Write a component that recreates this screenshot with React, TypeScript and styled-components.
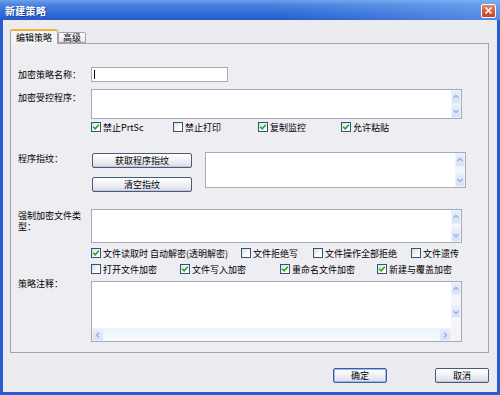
import React from "react";
import styled, { createGlobalStyle } from "styled-components";

const Global = createGlobalStyle`
  * { box-sizing: border-box; }
  html, body { margin: 0; padding: 0; background: #ffffff; }
  body { font-family: "Noto Sans CJK SC", "Noto Sans", sans-serif; font-size: 9px; color: #000; }
`;

const Window = styled.div`
  width: 500px;
  height: 395px;
  background: #2a5bd0;
  display: flex;
  flex-direction: column;
  overflow: hidden;
`;

const TitleBar = styled.div`
  height: 20px;
  flex: none;
  display: flex;
  align-items: center;
  justify-content: space-between;
  padding: 0 4px 0 5px;
  background: linear-gradient(180deg, #6f9fea 0%, #4682de 25%, #3470d8 60%, #2858c8 100%);
  position: relative;
  &::after {
    content: "";
    position: absolute;
    inset: 0;
    background: linear-gradient(90deg, rgba(255,255,255,0) 55%, rgba(150,195,255,0.45) 100%);
    pointer-events: none;
  }
`;

const Title = styled.span`
  color: #fff;
  font-weight: bold;
  font-size: 10px;
  letter-spacing: 0.3px;
  text-shadow: 1px 1px 0 #1b3f99;
  position: relative;
  z-index: 1;
`;

const CloseBtn = styled.div`
  width: 15px;
  height: 14px;
  margin-top: 1px;
  border: 1px solid #ffffff;
  border-radius: 2px;
  background: linear-gradient(180deg, #e8876a 0%, #d45a3c 55%, #c4462c 100%);
  display: flex;
  align-items: center;
  justify-content: center;
  position: relative;
  z-index: 1;
`;

const Body = styled.div`
  flex: 1;
  margin: 0 3px 3px 3px;
  background: #ecebf0;
  padding: 9px 8px 0 7px;
  display: flex;
  flex-direction: column;
`;

const TabStrip = styled.div`
  display: flex;
  align-items: flex-end;
  height: 14px;
  position: relative;
  z-index: 2;
`;

const Tab = styled.div<{ $active?: boolean }>`
  height: ${(p) => (p.$active ? "15px" : "11px")};
  margin-bottom: ${(p) => (p.$active ? "-1px" : "0")};
  padding: 0 ${(p) => (p.$active ? "5px" : "4px")};
  display: flex;
  align-items: center;
  border: 1px solid #a2a2b0;
  border-bottom: ${(p) => (p.$active ? "none" : "1px solid #a2a2b0")};
  border-top: ${(p) => (p.$active ? "2px solid #f2b33c" : "1px solid #a2a2b0")};
  border-radius: 2px 2px 0 0;
  background: ${(p) => (p.$active ? "#f4f3f6" : "linear-gradient(180deg, #ffffff 0%, #e6e5ec 100%)")};
  font-size: 9px;
  line-height: 1;
`;

const Panel = styled.div`
  width: 479px;
  height: 310px;
  border: 1px solid #a2a2b0;
  background: #eeedf2;
  padding: 23px 0 0 7px;
  display: flex;
  flex-direction: column;
`;

const Row = styled.div<{ $mt?: number; $h: number }>`
  display: flex;
  margin-top: ${(p) => p.$mt ?? 0}px;
  height: ${(p) => p.$h}px;
`;

const Label = styled.div<{ $pt?: number }>`
  width: 73px;
  flex: none;
  margin-top: ${(p) => p.$pt ?? 0}px;
  font-size: 9px;
  line-height: 11px;
  white-space: normal;
  word-break: break-all;
`;

const Input = styled.div<{ $w: number }>`
  width: ${(p) => p.$w}px;
  height: 15px;
  background: #fff;
  border: 1px solid #a5acb8;
  position: relative;
  &::before {
    content: "";
    position: absolute;
    left: 2px;
    top: 2px;
    width: 1px;
    height: 9px;
    background: #000;
  }
`;

const Box = styled.div<{ $w: number; $h: number; $ml?: number }>`
  width: ${(p) => p.$w}px;
  height: ${(p) => p.$h}px;
  margin-left: ${(p) => p.$ml ?? 0}px;
  background: #fff;
  border: 1px solid #a5acb8;
  display: flex;
`;

const BoxMain = styled.div`
  flex: 1;
  display: flex;
  flex-direction: column;
  min-width: 0;
`;

const BoxText = styled.div`
  flex: 1;
`;

const VScroll = styled.div`
  width: 10px;
  flex: none;
  display: flex;
  flex-direction: column;
  justify-content: space-between;
  background: #f4f6fb;
`;

const HScroll = styled.div`
  height: 13px;
  flex: none;
  display: flex;
  justify-content: space-between;
  align-items: stretch;
  background: linear-gradient(180deg, #eef3fc 0%, #f7f9fd 100%);
`;

const ArrowBtn = styled.div<{ $w?: number; $h?: number }>`
  width: ${(p) => p.$w ?? 10}px;
  height: ${(p) => p.$h ?? 13}px;
  background: linear-gradient(180deg, #e7eefb 0%, #d7e2f7 100%);
  border: 1px solid #eef3fb;
  border-radius: 1px;
  display: flex;
  align-items: center;
  justify-content: center;
`;

const Corner = styled.div`
  width: 10px;
  height: 13px;
  flex: none;
  background: #f4f4f6;
`;

const CheckRow = styled.div<{ $mt: number }>`
  display: flex;
  margin-top: ${(p) => p.$mt}px;
  margin-left: 73px;
  height: 12px;
  align-items: center;
`;

const CheckItem = styled.div<{ $w?: number }>`
  width: ${(p) => (p.$w ? `${p.$w}px` : "auto")};
  flex: none;
  display: flex;
  align-items: center;
  gap: 2px;
  white-space: nowrap;
  font-size: 9px;
  line-height: 1;
`;

const CheckBox = styled.div`
  width: 10px;
  height: 10px;
  flex: none;
  border: 1px solid #2c5581;
  background: linear-gradient(135deg, #dcdcd6 0%, #ffffff 70%);
  display: flex;
  align-items: center;
  justify-content: center;
`;

const BtnCol = styled.div`
  display: flex;
  flex-direction: column;
  gap: 9px;
  padding-top: 1px;
  margin-left: 1px;
`;

const Button = styled.div<{ $w: number; $default?: boolean }>`
  width: ${(p) => p.$w}px;
  height: 15px;
  border: 1px solid ${(p) => (p.$default ? "#3d5fa8" : "#4b5a78")};
  border-radius: 2px;
  background: linear-gradient(180deg, #ffffff 0%, #f1f2f6 45%, #d9dce6 100%);
  box-shadow: ${(p) => (p.$default ? "inset 0 0 0 1px #9ab8ee" : "inset 0 -1px 0 #c3c6d4")};
  display: flex;
  align-items: center;
  justify-content: center;
  font-size: 9px;
  line-height: 1;
`;

const Footer = styled.div`
  display: flex;
  justify-content: flex-end;
  gap: 48px;
  margin-top: 15px;
`;

const Chevron = ({ dir }: { dir: "up" | "down" | "left" | "right" }) => {
  const d = {
    up: "M1.5 5 L4 2.5 L6.5 5",
    down: "M1.5 3 L4 5.5 L6.5 3",
    left: "M5 1.5 L2.5 4 L5 6.5",
    right: "M3 1.5 L5.5 4 L3 6.5",
  }[dir];
  return (
    <svg width="8" height="8" viewBox="0 0 8 8">
      <path d={d} fill="none" stroke="#98b0dc" strokeWidth="1.3" />
    </svg>
  );
};

const Check = ({ on }: { on?: boolean }) => (
  <CheckBox>
    {on && (
      <svg width="8" height="8" viewBox="0 0 8 8">
        <path d="M1.2 3.8 L3.2 5.8 L6.8 1.8" fill="none" stroke="#21a121" strokeWidth="1.6" />
      </svg>
    )}
  </CheckBox>
);

const Item = ({ label, on, w }: { label: string; on?: boolean; w?: number }) => (
  <CheckItem $w={w}>
    <Check on={on} />
    <span>{label}</span>
  </CheckItem>
);

const VBar = ({ h = 13 }: { h?: number }) => (
  <VScroll>
    <ArrowBtn $h={h}>
      <Chevron dir="up" />
    </ArrowBtn>
    <ArrowBtn $h={h}>
      <Chevron dir="down" />
    </ArrowBtn>
  </VScroll>
);

export default function App() {
  return (
    <>
      <Global />
      <Window>
        <TitleBar>
          <Title>新建策略</Title>
          <CloseBtn>
            <svg width="9" height="9" viewBox="0 0 9 9">
              <path d="M1.5 1.5 L7.5 7.5 M7.5 1.5 L1.5 7.5" stroke="#fff" strokeWidth="1.6" />
            </svg>
          </CloseBtn>
        </TitleBar>
        <Body>
          <TabStrip>
            <Tab $active>编辑策略</Tab>
            <Tab>高级</Tab>
          </TabStrip>
          <Panel>
            <Row $h={15}>
              <Label $pt={2}>加密策略名称：</Label>
              <Input $w={137} />
            </Row>
            <Row $mt={7} $h={30}>
              <Label $pt={3}>加密受控程序：</Label>
              <Box $w={371} $h={30}>
                <BoxText />
                <VBar h={14} />
              </Box>
            </Row>
            <CheckRow $mt={2}>
              <Item label="禁止PrtSc" on w={82} />
              <Item label="禁止打印" w={85} />
              <Item label="复制监控" on w={83} />
              <Item label="允许粘贴" on />
            </CheckRow>
            <Row $mt={19} $h={40}>
              <Label $pt={1}>程序指纹：</Label>
              <BtnCol>
                <Button $w={100}>获取程序指纹</Button>
                <Button $w={100}>清空指纹</Button>
              </BtnCol>
              <Box $w={261} $h={36} $ml={13}>
                <BoxText />
                <VBar h={14} />
              </Box>
            </Row>
            <Row $mt={17} $h={34}>
              <Label $pt={1}>强制加密文件类型：</Label>
              <Box $w={371} $h={34}>
                <BoxText />
                <VBar h={14} />
              </Box>
            </Row>
            <CheckRow $mt={4}>
              <Item label="文件读取时 自动解密(透明解密)" on w={150} />
              <Item label="文件拒绝写" w={72} />
              <Item label="文件操作全部拒绝" w={98} />
              <Item label="文件遗传" />
            </CheckRow>
            <CheckRow $mt={4}>
              <Item label="打开文件加密" w={89} />
              <Item label="文件写入加密" on w={100} />
              <Item label="重命名文件加密" on w={97} />
              <Item label="新建与覆盖加密" on />
            </CheckRow>
            <Row $mt={6} $h={61}>
              <Label $pt={-3}>策略注释：</Label>
              <Box $w={371} $h={61}>
                <BoxMain>
                  <BoxText />
                  <HScroll>
                    <ArrowBtn $w={12} $h={13}>
                      <Chevron dir="left" />
                    </ArrowBtn>
                    <ArrowBtn $w={12} $h={13}>
                      <Chevron dir="right" />
                    </ArrowBtn>
                  </HScroll>
                </BoxMain>
                <VScroll>
                  <ArrowBtn $h={13}>
                    <Chevron dir="up" />
                  </ArrowBtn>
                  <ArrowBtn $h={13}>
                    <Chevron dir="down" />
                  </ArrowBtn>
                  <Corner />
                </VScroll>
              </Box>
            </Row>
          </Panel>
          <Footer>
            <Button $w={54} $default>确定</Button>
            <Button $w={54}>取消</Button>
          </Footer>
        </Body>
      </Window>
    </>
  );
}
